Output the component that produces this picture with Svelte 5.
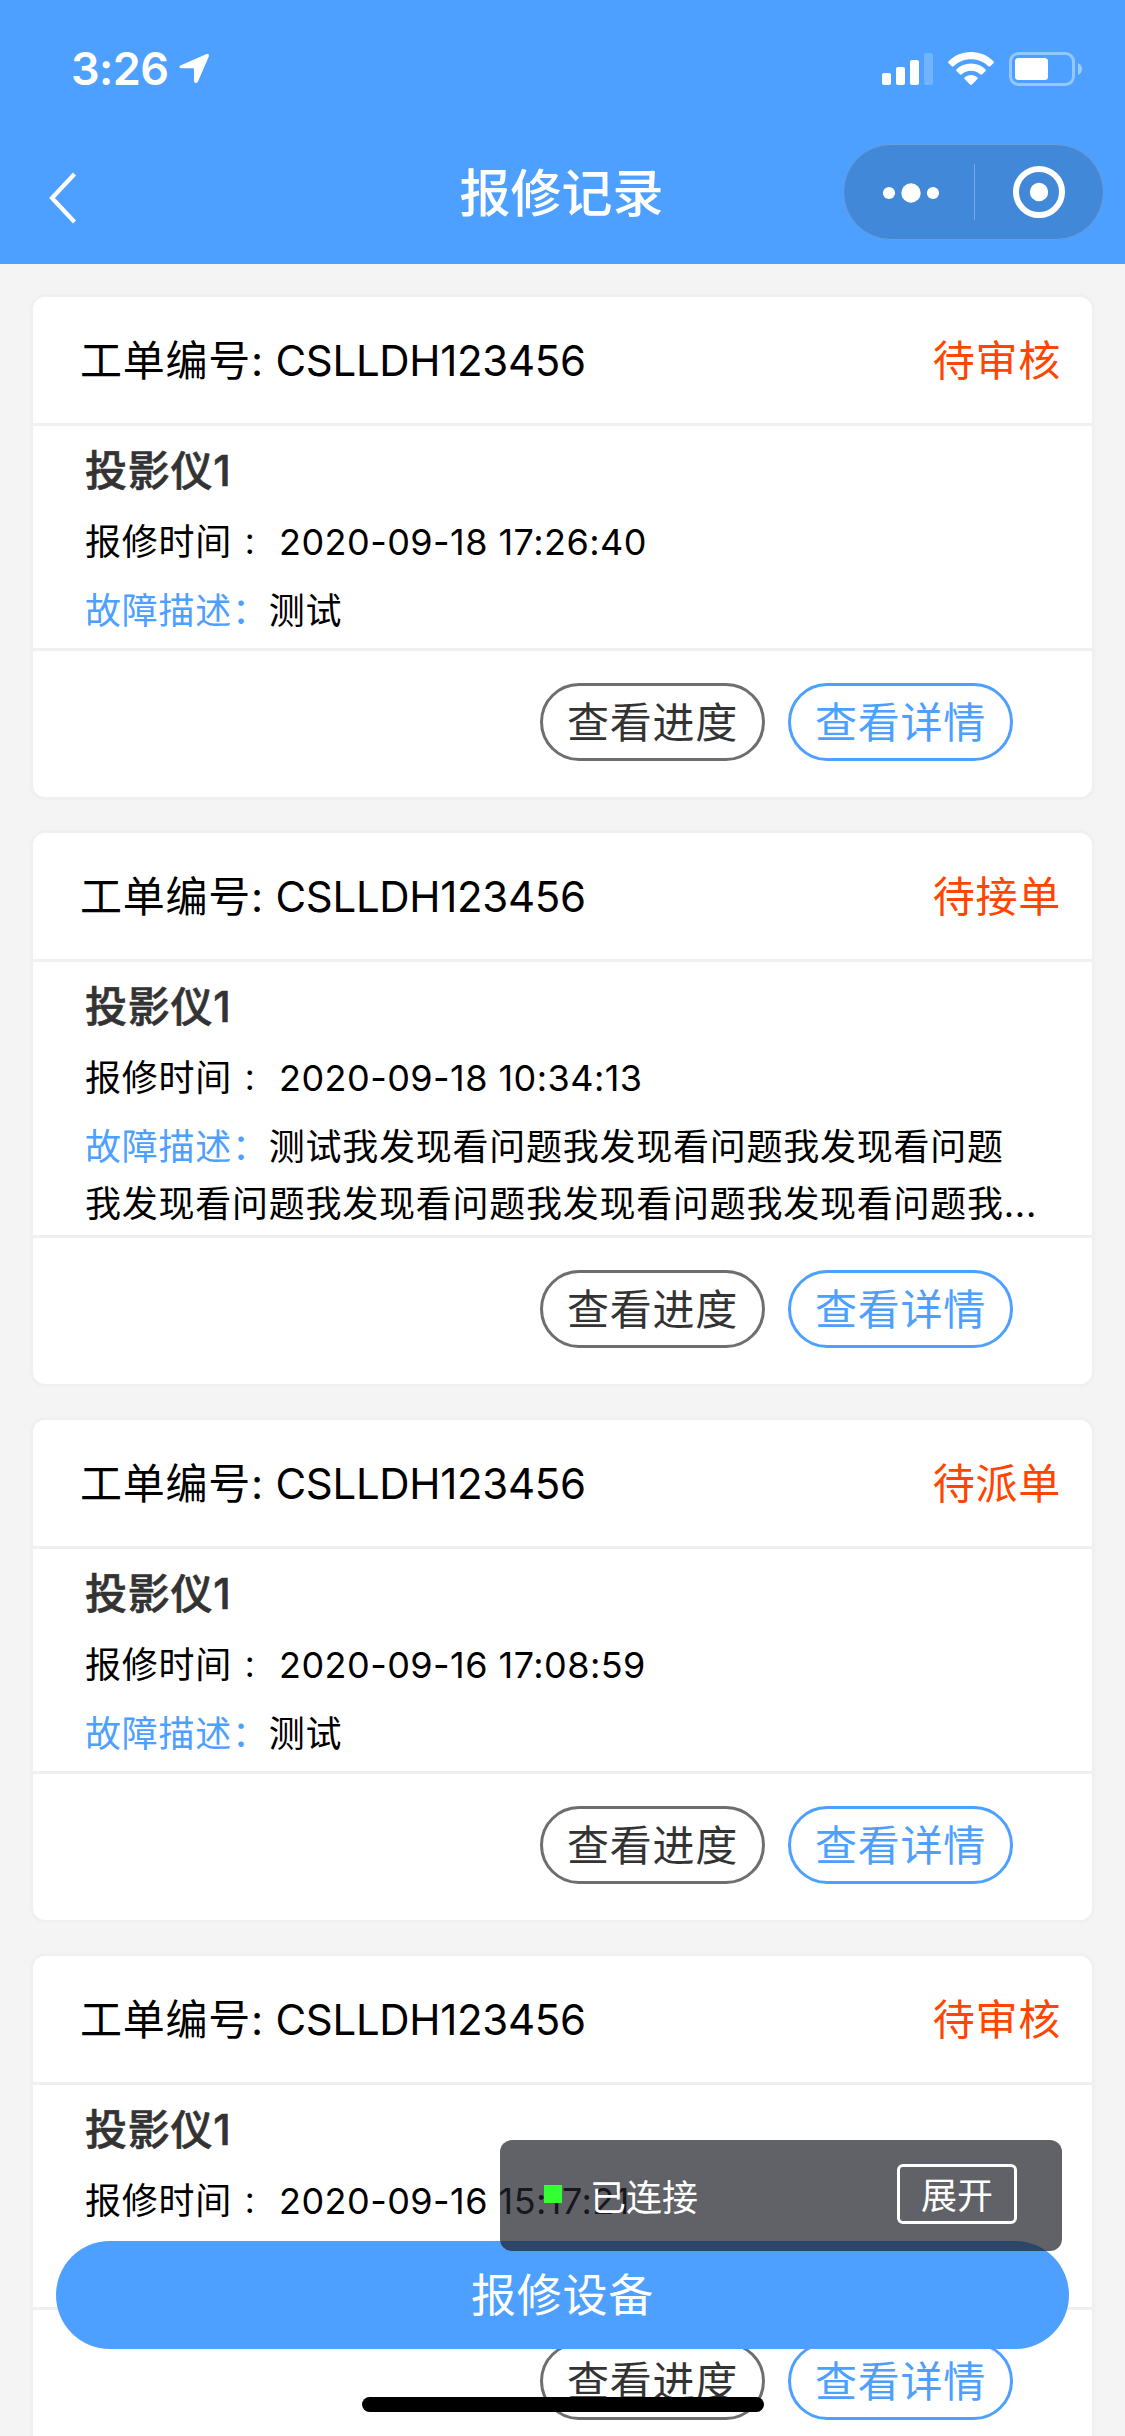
<script lang="ts">
	type Order = {
		no: string
		status: string
		device: string
		time: string
		fault: string
	}

	const orders: Order[] = [
		{
			no: 'CSLLDH123456',
			status: '待审核',
			device: '投影仪1',
			time: '2020-09-18 17:26:40',
			fault: '测试',
		},
		{
			no: 'CSLLDH123456',
			status: '待接单',
			device: '投影仪1',
			time: '2020-09-18 10:34:13',
			fault: '测试' + '我发现看问题'.repeat(7) + '我...',
		},
		{
			no: 'CSLLDH123456',
			status: '待派单',
			device: '投影仪1',
			time: '2020-09-16 17:08:59',
			fault: '测试',
		},
		{
			no: 'CSLLDH123456',
			status: '待审核',
			device: '投影仪1',
			time: '2020-09-16 15:17:21',
			fault: '',
		},
	]
</script>

<div class="phone">
	<header>
		<div class="status-bar">
			<span class="clock">3:26</span>
			<svg class="location" width="31" height="31" viewBox="0 0 31 31">
				<path
					d="M2 12.2 27.6 1.1Q30.6.2 29.8 3.4L19 28.5Q18 30.3 16.4 30 15 29.6 15 27.7V16.3Q15 15.3 14 15.3H2.6Q.8 15.2.4 14 .2 12.9 2 12.2Z"
				/>
			</svg>
			<div class="indicators">
				<svg width="51" height="32" viewBox="0 0 51 32">
					<rect y="20" width="9" height="12" rx="2" />
					<rect x="14" y="14" width="9" height="18" rx="2" />
					<rect x="28" y="7" width="9" height="25" rx="2" />
					<rect x="42" width="9" height="32" rx="2" opacity="0.2" />
				</svg>
				<svg width="46" height="34" viewBox="0 0 46 34">
					<path
						d="M23 0C32 0 40 3.6 45.4 9.2Q46.3 10.2 45.4 11.2L42.2 14.3Q41.3 15.1 40.4 14.2C36 9.9 30 7.2 23 7.2S10 9.9 5.6 14.2Q4.7 15.1 3.8 14.3L.6 11.2Q-.3 10.2.6 9.2C6 3.6 14 0 23 0Z"
					/>
					<path
						d="M23 11.6C28.8 11.6 33.7 13.8 37.4 17.3Q38.3 18.2 37.4 19.2L34.2 22.3Q33.2 23.2 32.2 22.3C29.7 20 26.6 18.7 23 18.7S16.3 20 13.8 22.3Q12.8 23.2 11.8 22.3L8.6 19.2Q7.7 18.2 8.6 17.3C12.3 13.8 17.2 11.6 23 11.6Z"
					/>
					<path
						d="M23 23C25.5 23 27.8 23.9 29.4 25.4Q30.2 26.3 29.4 27.1L24 32.5Q23 33.4 22 32.5L16.6 27.1Q15.8 26.3 16.6 25.4C18.2 23.9 20.5 23 23 23Z"
					/>
				</svg>
				<svg width="74" height="34" viewBox="0 0 74 34">
					<rect class="shell" x="1.5" y="1.5" width="63" height="31" rx="8" />
					<rect x="6" y="6" width="33" height="22" rx="3.5" />
					<path d="M69 11Q73 13 73 17T69 23Z" opacity="0.45" />
				</svg>
			</div>
		</div>

		<div class="nav-bar">
			<button class="back" aria-label="返回">
				<svg width="30" height="52" viewBox="0 0 30 52">
					<path d="M26.5 2 4 26 26.5 50" />
				</svg>
			</button>
			<h1>报修记录</h1>
			<div class="capsule">
				<svg width="130" height="94" viewBox="0 0 130 94">
					<circle cx="45" cy="48" r="6.1" />
					<circle cx="67" cy="48" r="9.7" />
					<circle cx="89" cy="48" r="6.1" />
				</svg>
				<i></i>
				<svg width="128" height="94" viewBox="0 0 128 94">
					<circle class="ring" cx="64" cy="47" r="23" />
					<circle cx="64" cy="47" r="9.2" />
				</svg>
			</div>
		</div>
	</header>

	<main>
		{#each orders as order}
			<article>
				<div class="head">
					<span>工单编号: <b>{order.no}</b></span>
					<span class="state">{order.status}</span>
				</div>
				<div class="body">
					<h2>{order.device}</h2>
					<p class="time">报修时间<span class="colon">：</span><time>{order.time}</time></p>
					{#if order.fault}
						<p class="fault"><span>故障描述：</span>{order.fault}</p>
					{/if}
				</div>
				<div class="foot">
					<button>查看进度</button>
					<button class="primary">查看详情</button>
				</div>
			</article>
		{/each}
	</main>

	<button class="report">报修设备</button>

	<div class="toast">
		<i class="dot"></i>
		<span>已连接</span>
		<button>展开</button>
	</div>

	<div class="home-indicator"></div>
</div>

<style>
	:global(body) {
		margin: 0;
	}

	.phone {
		--blue: #4da0ff;
		position: relative;
		width: 1125px;
		height: 2436px;
		overflow: hidden;
		background: #f4f4f4;
		color: #000;
		font-family: Inter, 'Noto Sans CJK SC', sans-serif;
		letter-spacing: 0.75px;
	}

	h1,
	h2,
	p {
		margin: 0;
	}

	button {
		box-sizing: border-box;
		padding: 0;
		border: 0;
		background: none;
		color: inherit;
		font: inherit;
		letter-spacing: inherit;
	}

	svg {
		display: block;
		fill: #fff;
	}

	header {
		height: 264px;
		background: var(--blue);
		color: #fff;
	}

	.status-bar {
		display: flex;
		align-items: center;
		height: 132px;
		padding: 5px 42px 0 71px;
		box-sizing: border-box;
	}

	.clock {
		width: 108px;
		font-size: 45px;
		font-weight: 600;
		letter-spacing: -0.6px;
	}

	.indicators {
		display: flex;
		align-items: center;
		gap: 15px;
		margin-left: auto;
	}

	.shell {
		fill: none;
		stroke: #fff;
		stroke-width: 3;
		opacity: 0.4;
	}

	.nav-bar {
		display: grid;
		grid-template-columns: 1fr auto 1fr;
		align-items: center;
		height: 120px;
		padding: 0 21px;
	}

	.back {
		justify-self: start;
		padding: 11px 0 0 27px;
	}

	.back path {
		fill: none;
		stroke: #fff;
		stroke-width: 4.2;
	}

	h1 {
		padding: 3px 2px 0 0;
		font-size: 51px;
		font-weight: 500;
		letter-spacing: 0;
		line-height: 76px;
	}

	.capsule {
		display: flex;
		align-items: center;
		justify-self: end;
		border: 1px solid #699fd9;
		border-radius: 48px;
		background: #4189d8;
	}

	.capsule i {
		width: 1px;
		height: 56px;
		background: #76abe6;
	}

	.ring {
		fill: none;
		stroke: #fff;
		stroke-width: 6;
	}

	main {
		display: flex;
		flex-direction: column;
		gap: 30px;
		padding: 30px;
	}

	article {
		flex: none;
		border: 3px solid #f0f0f0;
		border-radius: 15px;
		background: #fff;
		font-size: 42px;
	}

	.head {
		box-sizing: border-box;
		display: flex;
		align-items: center;
		justify-content: space-between;
		height: 129px;
		padding: 0 31px 6px 47px;
		border-bottom: 3px solid #f0f0f0;
	}

	.head b {
		margin-left: -1px;
		font-weight: 400;
		letter-spacing: -0.3px;
	}

	.state {
		color: #ff4500;
	}

	.body {
		box-sizing: border-box;
		min-height: 225px;
		padding: 15px 53px 2px 52px;
		border-bottom: 3px solid #f0f0f0;
		font-size: 36px;
	}

	h2 {
		color: #333;
		font-size: 42px;
		font-weight: 500;
		line-height: 60px;
		-webkit-text-stroke: 0.6px #333;
	}

	.time {
		height: 56px;
		margin-top: 13px;
		line-height: 56px;
	}

	.colon {
		display: inline-block;
		width: 36px;
		font-family: 'Noto Sans CJK TC', sans-serif;
		font-size: 30px;
		line-height: 1;
		text-align: center;
	}

	time {
		margin-left: 11px;
		letter-spacing: 0.45px;
	}

	.fault {
		margin-top: 13px;
		line-height: 57px;
	}

	.fault span {
		color: var(--blue);
	}

	.foot {
		display: flex;
		justify-content: flex-end;
		gap: 23px;
		height: 114px;
		padding: 32px 79px 0 0;
	}

	.foot button {
		width: 225px;
		height: 78px;
		padding-bottom: 5px;
		border: 3px solid #6e6e6e;
		border-radius: 39px;
		color: #333;
	}

	.foot .primary {
		border-color: var(--blue);
		color: var(--blue);
	}

	.report {
		position: absolute;
		top: 2241px;
		left: 56px;
		width: 1013px;
		height: 108px;
		padding-bottom: 6px;
		border-radius: 54px;
		background: var(--blue);
		color: #fff;
		font-size: 45px;
	}

	.toast {
		position: absolute;
		top: 2140px;
		left: 500px;
		display: flex;
		align-items: center;
		box-sizing: border-box;
		width: 562px;
		height: 111px;
		padding: 0 45px 3px 44px;
		border-radius: 12px;
		background: rgba(32, 34, 42, 0.71);
		color: #fff;
		font-size: 36px;
		letter-spacing: 0;
	}

	.toast span {
		margin-top: 2px;
	}

	.dot {
		width: 18px;
		height: 18px;
		margin-right: 28px;
		background: #33ff33;
	}

	.toast button {
		width: 120px;
		height: 60px;
		padding-bottom: 3px;
		margin-left: auto;
		border: 3px solid #fff;
		border-radius: 6px;
	}

	.home-indicator {
		position: absolute;
		bottom: 24px;
		left: 362px;
		width: 402px;
		height: 15px;
		border-radius: 8px;
		background: #000;
	}
</style>
